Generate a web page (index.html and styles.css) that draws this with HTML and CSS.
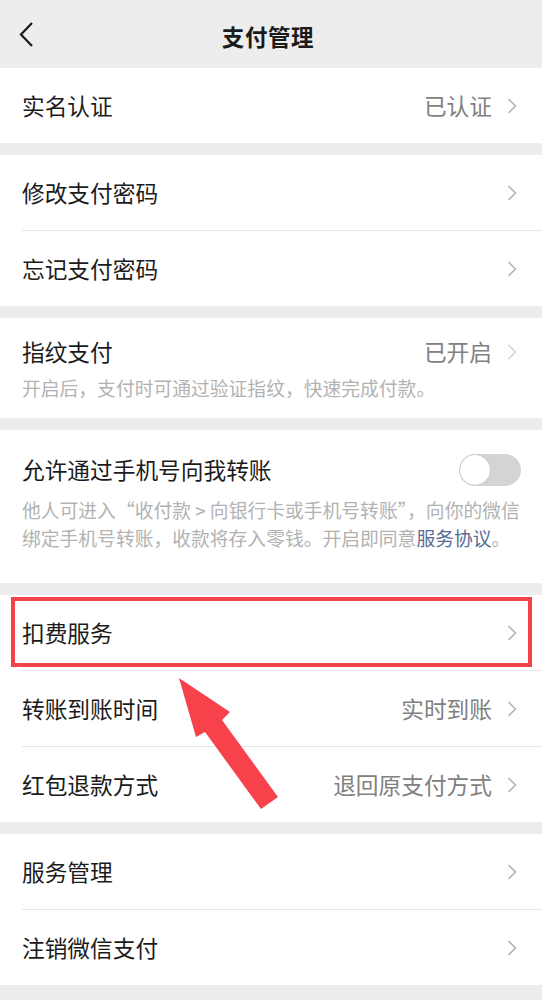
FILE: index.html
```html
<!DOCTYPE html>
<html lang="zh-CN">
  <head>
    <meta charset="UTF-8" />
    <meta name="viewport" content="width=device-width, initial-scale=1.0" />
    <title>支付管理</title>
    <link rel="stylesheet" href="styles.css">
  </head>
  <body>
    <div class="page">
      <header class="navbar">
        <svg class="navbar__back" width="16" height="28" viewBox="0 0 16 28">
          <polyline points="13,2 2,13.5 13,25" fill="none" stroke="#1a1a1a" stroke-width="2.2" stroke-linejoin="miter" />
        </svg>
        <div class="navbar__title">支付管理</div>
      </header>

      <div class="group">
        <div class="cell">
          <div class="cell__body">
            <span class="cell__title">实名认证</span>
            <span class="cell__value">已认证</span>
            <svg class="chevron" width="10" height="16" viewBox="0 0 10 16"><polyline points="1.5,1 8.5,8 1.5,15" /></svg>
          </div>
        </div>
      </div>

      <div class="group">
        <div class="cell">
          <div class="cell__body">
            <span class="cell__title">修改支付密码</span>
            <svg class="chevron" width="10" height="16" viewBox="0 0 10 16"><polyline points="1.5,1 8.5,8 1.5,15" /></svg>
          </div>
        </div>
        <div class="cell">
          <div class="cell__body">
            <span class="cell__title">忘记支付密码</span>
            <svg class="chevron" width="10" height="16" viewBox="0 0 10 16"><polyline points="1.5,1 8.5,8 1.5,15" /></svg>
          </div>
        </div>
      </div>

      <div class="group">
        <div class="block block--finger">
          <div class="block__head">
            <span class="cell__title">指纹支付</span>
            <span class="cell__value">已开启</span>
            <svg class="chevron chevron--faint" width="10" height="16" viewBox="0 0 10 16"><polyline points="1.5,1 8.5,8 1.5,15" /></svg>
          </div>
          <p class="block__desc">开启后，支付时可通过验证指纹，快速完成付款。</p>
        </div>
      </div>

      <div class="group">
        <div class="block block--phone">
          <div class="block__head">
            <span class="cell__title">允许通过手机号向我转账</span>
            <span class="switch"><span class="switch__knob"></span></span>
          </div>
          <p class="block__desc block__desc--tall">他人可进入“收付款 &gt; 向银行卡或手机号转账”，向你的微信<br>绑定手机号转账，收款将存入零钱。开启即同意<span class="link">服务协议</span>。</p>
        </div>
      </div>

      <div class="group">
        <div class="cell">
          <div class="cell__body">
            <span class="cell__title">扣费服务</span>
            <svg class="chevron" width="10" height="16" viewBox="0 0 10 16"><polyline points="1.5,1 8.5,8 1.5,15" /></svg>
          </div>
        </div>
        <div class="cell">
          <div class="cell__body">
            <span class="cell__title">转账到账时间</span>
            <span class="cell__value">实时到账</span>
            <svg class="chevron" width="10" height="16" viewBox="0 0 10 16"><polyline points="1.5,1 8.5,8 1.5,15" /></svg>
          </div>
        </div>
        <div class="cell">
          <div class="cell__body">
            <span class="cell__title">红包退款方式</span>
            <span class="cell__value">退回原支付方式</span>
            <svg class="chevron" width="10" height="16" viewBox="0 0 10 16"><polyline points="1.5,1 8.5,8 1.5,15" /></svg>
          </div>
        </div>
      </div>

      <div class="group">
        <div class="cell">
          <div class="cell__body">
            <span class="cell__title">服务管理</span>
            <svg class="chevron" width="10" height="16" viewBox="0 0 10 16"><polyline points="1.5,1 8.5,8 1.5,15" /></svg>
          </div>
        </div>
        <div class="cell">
          <div class="cell__body">
            <span class="cell__title">注销微信支付</span>
            <svg class="chevron" width="10" height="16" viewBox="0 0 10 16"><polyline points="1.5,1 8.5,8 1.5,15" /></svg>
          </div>
        </div>
      </div>

      <!-- annotation drawn on top of the screenshot -->
      <div class="mark"></div>
      <svg class="pointer" width="120" height="150" viewBox="0 0 120 150">
        <polygon points="9,8 60,42 52,50 108,127 91,139 35,62 26,67" fill="#f7424b" />
      </svg>
    </div>
  </body>
</html>
```

FILE: styles.css
```css
body {
  margin: 0;
  background-color: #ededed;
  font-family: "Noto Sans CJK SC", "Noto Sans", sans-serif;
  color: #1b1b1b;
}

.page {
  position: relative;
  width: 542px;
  min-height: 1000px;
}

.navbar {
  position: relative;
  height: 68px;
  display: flex;
  align-items: center;
  justify-content: center;
}

.navbar__back {
  position: absolute;
  left: 19px;
  top: 21px;
}

.navbar__title {
  font-size: 22.5px;
  font-weight: 700;
  letter-spacing: 0.6px;
  padding-top: 4px;
  margin-left: -6px;
}

.group {
  background-color: #ffffff;
  margin-bottom: 12px;
}

.cell {
  padding-left: 22px;
}

.cell__body {
  display: flex;
  align-items: center;
  height: 75px;
  padding-right: 25px;
}

.cell + .cell .cell__body {
  border-top: 1px solid #e6e6e6;
}

.cell__title {
  flex: 1;
  font-size: 22.7px;
  line-height: 28px;
}

.cell__value {
  font-size: 22.7px;
  line-height: 28px;
  color: #808080;
  margin-right: 15px;
}

.chevron {
  display: block;
}

.chevron polyline {
  fill: none;
  stroke: #b4b4b4;
  stroke-width: 1.6;
}

.chevron--faint polyline {
  stroke: #d6d6d6;
}

.block {
  padding: 20px 25px 17px 22px;
}

.block--phone {
  padding: 26px 21px 31px 22px;
}

.block__head {
  display: flex;
  align-items: center;
  height: 28px;
}

.block__desc {
  margin: 9px 0 0;
  font-size: 18.8px;
  line-height: 26px;
  color: #b2b2b2;
  white-space: nowrap;
}

.block__desc--tall {
  margin-top: 12px;
  line-height: 28px;
}

.link {
  color: #576b95;
}

.switch {
  position: relative;
  width: 62px;
  height: 32px;
  border-radius: 16px;
  background-color: #d4d4d4;
}

.switch__knob {
  position: absolute;
  left: 1px;
  top: 1px;
  width: 30px;
  height: 30px;
  border-radius: 50%;
  background-color: #ffffff;
  box-shadow: 0 0 1px rgba(0, 0, 0, 0.25);
}

.mark {
  position: absolute;
  left: 11px;
  top: 597px;
  width: 513px;
  height: 62px;
  border: 4px solid #f2434b;
}

.pointer {
  position: absolute;
  left: 170px;
  top: 670px;
}
```
